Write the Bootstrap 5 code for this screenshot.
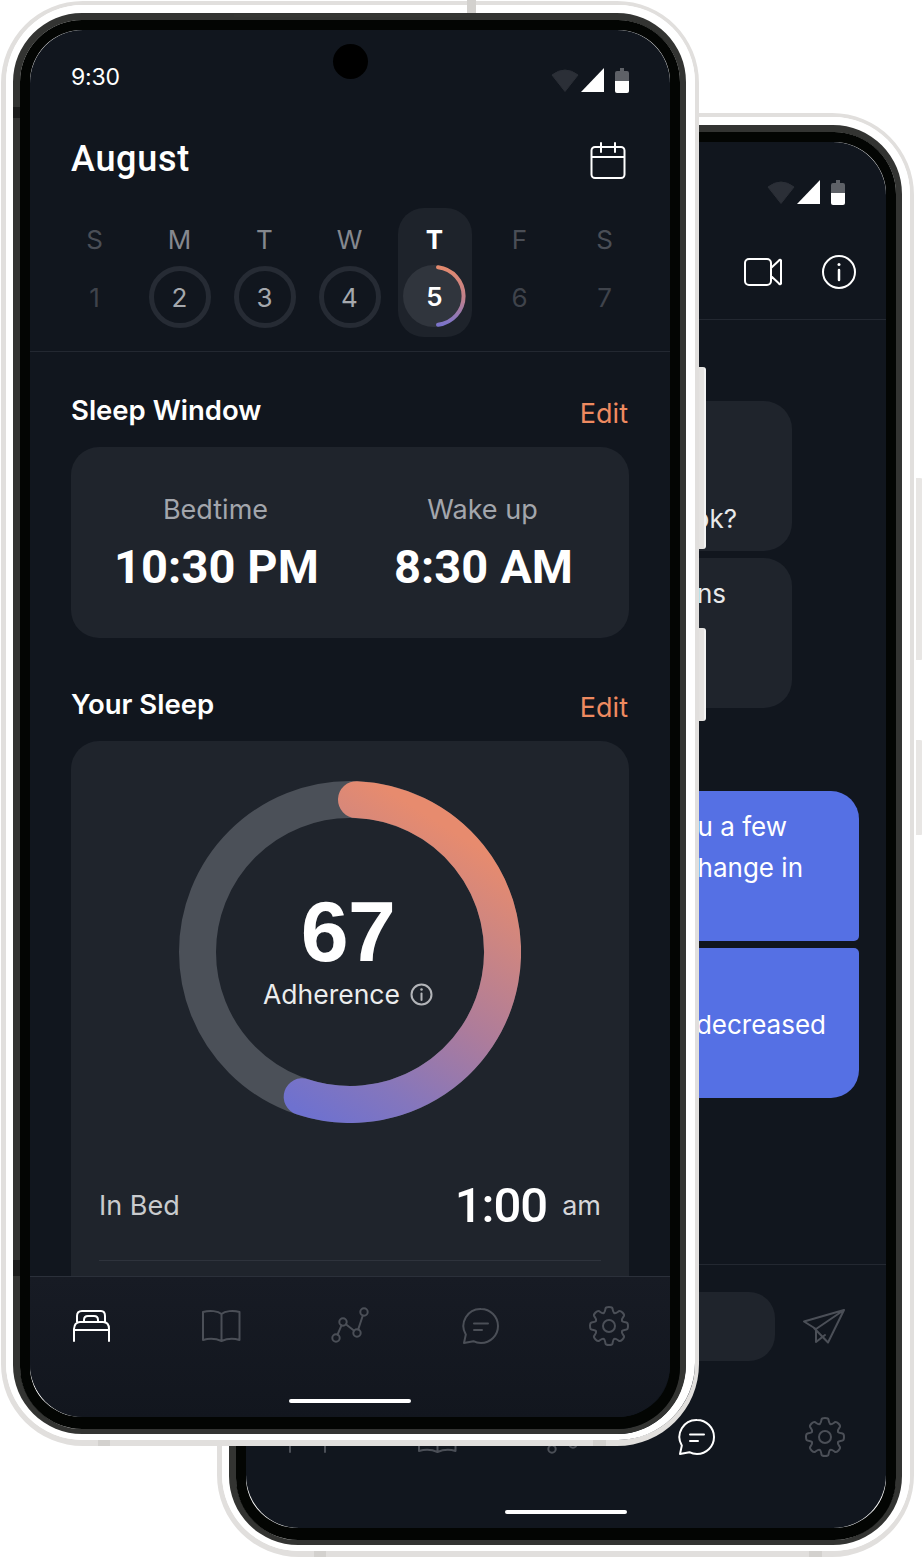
<!DOCTYPE html>
<html lang="en">
<head>
<meta charset="utf-8">
<title>Sleep app</title>
<link rel="stylesheet" href="https://cdn.jsdelivr.net/npm/bootstrap@5.3.0/dist/css/bootstrap.min.css">
<script src="https://cdn.jsdelivr.net/npm/bootstrap@5.3.0/dist/js/bootstrap.bundle.min.js"></script>
<style>
html,body{margin:0;background:#fff;font-family:Inter,"Liberation Sans",sans-serif}
.stage{width:922px;height:1559px;overflow:hidden;position:relative}
.phone{position:absolute}
.ph-front{left:1px;top:1px}
.ph-back{left:217px;top:113px}
.fr-a{border:solid #e1dfdd;border-width:4px 4px 6px 5px;border-radius:82px}
.fr-b{border:solid #fff;border-width:8px 9px 6px 7px;border-radius:77px}
.ph-back .fr-b{border-right-width:8px}
.fr-c{border:solid #333432;border-width:7px 6px 5px 7px;border-radius:69px}
.fr-d{border:solid #030503;border-width:10px 10px 12px 10px;border-radius:62px}
.scr{width:640px;height:1387px;background:#11161e;border-radius:53px;overflow:hidden;color:#fff}
.ph-back .scr{height:1386px}
.sidebtn{position:absolute;width:7px;background:linear-gradient(90deg,#e4e2e0 0 5px,#f4f4f3 5px);border-radius:0 3px 3px 0}
.ph-front .sb1{left:698px;top:366px;height:182px}
.ph-front .sb2{left:698px;top:627px;height:93px}
.ph-back .sb1{left:699px;top:365px;height:182px;background:#e8e6e4}
.ph-back .sb2{left:699px;top:627px;height:95px;background:#e8e6e4}
.tick{position:absolute;background:#d3d1ce}
.tk1{left:97px;bottom:0;width:12px;height:6px}
.tk2{left:592px;bottom:0;width:13px;height:6px}
.tk3{left:466px;top:-1px;width:9px;height:13px}
.grill{position:absolute;left:233px;top:13px;width:236px;height:3px;background:#353633}
.band{position:absolute;left:12px;width:7px;height:11px;background:#1c1d1c}
.bd1{top:106px}
.bd2{top:1259px;height:16px}
.cam{position:absolute;left:332px;top:43px;width:35px;height:35px;background:#000;border-radius:50%}
.stat{padding:38px 41px 0;height:62px}
.clock{font-size:23px;line-height:24px;margin-top:-3px;letter-spacing:-.2px}
.g-sig{margin-left:2px}
.g-bat{margin-left:11px}
.ttl{font-family:Roboto,Inter,sans-serif;font-size:36px;line-height:36px;font-weight:500;margin:-2px 0 0;letter-spacing:.7px}
.hd{padding:51px 42px 0 41px;height:87px}
.week{padding:29px 22px 0}
.dayc{width:85px}
.dayb{width:74px;height:129px;margin:0 auto;padding-top:17px;border-radius:26px}
.dayb.on{background:#1e232b}
.dl{font-size:26px;line-height:30px;text-align:center;color:#4a4e56}
.dl.m{color:#85888e}
.dl.on{color:#fff;font-weight:700}
.dn{width:62px;height:62px;margin:11px auto 0;font-size:26px;color:#3f434b}
.dn.rg{border:5px solid #262b34;border-radius:50%;color:#a5a8ad}
.dn.sel{position:relative;color:#fff;font-weight:600;margin-top:10px}
.dn svg{position:absolute;left:-1px;top:-1px}
.dn b{position:relative;font-weight:600}
.seph{border-top:1px solid #232831;margin-top:14px}
.shd{padding:40px 41px 0;height:95px}
.sh2{padding-top:48px;height:103px}
.sname{font-size:27.500px;line-height:36px;font-weight:600;margin:0}
.edit{font-size:27px;line-height:36px;color:#ee8a60;margin-top:4px;margin-right:1px;text-decoration:none}
.cardx{margin:0 41px;background:#1f242c;border-radius:28px}
.sw{height:191px;padding:45px 12px 0}
.lbl{font-size:27px;line-height:36px;color:#a3a6ac;text-align:center;margin-left:-2px}
.val{font-family:Roboto,Inter,sans-serif;font-size:47px;line-height:56px;font-weight:700;text-align:center;margin-top:11px;letter-spacing:.1px}
.sy{height:620px;padding:40px 28px 0}
.ringb{width:342px;height:342px;margin:0 auto;position:relative}
.ringt{position:absolute;left:-2px;top:0;width:100%;padding-top:108px;text-align:center}
.big{font-family:"Liberation Sans",Arial,sans-serif;font-size:86px;line-height:84px;font-weight:700;letter-spacing:-.5px}
.adh{font-size:26.500px;line-height:36px;margin-top:3px;color:#eceded;gap:10px}
.inbed{margin-top:53px;height:60px;margin-bottom:24px}
.ib-l{font-size:27px;color:#c9cbce}
.ib-v{font-family:Roboto,Inter,sans-serif;font-size:49px;line-height:60px;font-weight:500;letter-spacing:-1px}
.ib-u{font-size:27px;color:#d5d6d9;margin-left:15px}
.ib-rule{border-top:1px solid #2e333c}
.grow{min-height:0}
.nv{height:140px;padding:30px 42px 0 42px;flex:none}
.nv-f{background:linear-gradient(180deg,#171b24,#12161e);border-top:1px solid #2b303a;height:141px}
.hm{width:122px;height:4px;background:#fff;border-radius:2px;margin:54px auto 0}
.ic{width:38px;height:38px;display:block;overflow:visible;fill:none;stroke:#4b4f57;stroke-width:2;stroke-linecap:round;stroke-linejoin:round}
.ic.w{stroke:#fff}
.ic.ic-vid{width:40px;height:30px}
.ic.ic-send{width:42px;height:36px;margin-top:17px}
.chat-i{transform:translateX(1px)}
.hd2{padding:49px 28px 0 41px;height:87px;gap:37px}
.sep2{border-top:1px solid #232831;margin-top:28px}
.chat{padding-top:81px;gap:7px;overflow:hidden}
.bub{height:150px;font-size:26px;line-height:41px;padding:15px 0 0;text-align:right}
.bub span{display:block}
.bub-r{margin-left:41px;width:505px;background:#1f242c;border-radius:28px;color:#e8e9ea}
.bub-s{margin-left:41px;width:572px;background:#5570e4;color:#fff}
.bub-s1{margin-top:76px;border-radius:28px 28px 5px 28px}
.bub-s2{border-radius:28px 5px 28px 28px}
.e55{padding-right:55px}.e66{padding-right:66px}.e72{padding-right:72px}.e56{padding-right:56px}.e33{padding-right:33px}
.skip1{padding-top:41px}.skip2{padding-top:82px}
.ftr{height:124px;border-top:1px solid #232831;padding:27px 41px 0;flex:none;gap:28px}
.inp{width:489px;height:69px;background:#1f242c;border-radius:26px}
.svg-defs{position:absolute;width:0;height:0}
</style>
</head>
<body>
<svg class="svg-defs" aria-hidden="true">
  <defs>
    <symbol id="s-wifi" viewBox="0 0 28 24"><path d="M1 7Q14-3 27 7L14 23.500Z" fill="#2b2f37" stroke="#2b2f37" stroke-linejoin="round"/></symbol>
    <symbol id="s-sig" viewBox="0 0 23 24"><path d="M0 24 23 0V24Z" fill="#fff"/></symbol>
    <symbol id="s-bat" viewBox="0 0 14 25"><path d="M5 0h4v3h3a2 2 0 0 1 2 2v8H0V5a2 2 0 0 1 2-2h3Z" fill="#5e6167"/><path d="M0 13h14v10a2 2 0 0 1-2 2H2a2 2 0 0 1-2-2Z" fill="#fff"/></symbol>
    <symbol id="s-bed" viewBox="0 0 38 38" overflow="visible"><path d="M2 34V22Q2.500 15 8 15H31Q37 15 37 22V34M2 23H37M5 15V9Q5 4 10 4H29Q33 4 33 9V15M12 15V13Q12 9 16 9H22Q26 9 26 13V15"/></symbol>
    <symbol id="s-book" viewBox="0 0 38 38" overflow="visible"><path d="M19.500 7C16 4 8 3 1 5V33C8 31 15 32 19.500 34 24 32 31 31 37.500 33V5C31 3 23 4 19.500 7ZM19.500 7V34"/></symbol>
    <symbol id="s-graph" viewBox="0 0 38 38" overflow="visible"><circle cx="5" cy="31" r="3.700"/><circle cx="12" cy="15" r="3.700"/><circle cx="26" cy="26" r="3.700"/><circle cx="33" cy="5" r="3.700"/><path d="M6.500 27.600 10.500 18.400M14.900 17.300 23.100 23.700M27.200 22.500 31.800 8.500"/></symbol>
    <symbol id="s-chat" viewBox="0 0 38 38" overflow="visible"><path d="M19 2a17 17 0 0 1 0 34c-2.800 0-5.300-.6-7.600-1.800L2 36l1.800-8.400A17 17 0 0 1 19 2ZM12 16.500H26M12 23H20"/></symbol>
    <path id="g-tooth" d="M-5.360-12.930C-4-13.500-4-14.500-3.500-17.500-3.200-19-1.500-19 0-19S3.200-19 3.500-17.500C4-14.500 4-13.500 5.360-12.930"/>
    <symbol id="s-gear" viewBox="0 0 38 38" overflow="visible"><g transform="translate(19 19)"><circle r="6"/><use href="#g-tooth"/><use href="#g-tooth" transform="rotate(45)"/><use href="#g-tooth" transform="rotate(90)"/><use href="#g-tooth" transform="rotate(135)"/><use href="#g-tooth" transform="rotate(180)"/><use href="#g-tooth" transform="rotate(225)"/><use href="#g-tooth" transform="rotate(270)"/><use href="#g-tooth" transform="rotate(315)"/></g></symbol>
    <linearGradient id="g-ring" gradientUnits="userSpaceOnUse" x1="290" y1="60" x2="120" y2="330"><stop offset="0" stop-color="#e78b6e"/><stop offset=".2" stop-color="#cf8680"/><stop offset=".5" stop-color="#ad7c9b"/><stop offset=".8" stop-color="#8476bd"/><stop offset="1" stop-color="#6e71cf"/></linearGradient>
    <linearGradient id="g-day" gradientUnits="userSpaceOnUse" x1="35" y1="3" x2="35" y2="61"><stop offset="0" stop-color="#e48a6e"/><stop offset=".55" stop-color="#c0808c"/><stop offset="1" stop-color="#7a73cb"/></linearGradient>
  </defs>
</svg>

<div class="stage">

  <!-- Back phone: chat screen -->
  <div class="phone ph-back">
    <div class="fr-a"><div class="fr-b"><div class="fr-c"><div class="fr-d">
      <div class="scr d-flex flex-column">
        <div class="stat d-flex justify-content-end align-items-start">
          <div class="d-flex align-items-start">
            <svg width="28" height="24"><use href="#s-wifi"/></svg>
            <svg class="g-sig" width="23" height="24"><use href="#s-sig"/></svg>
            <svg class="g-bat" width="14" height="25"><use href="#s-bat"/></svg>
          </div>
        </div>
        <div class="hd2 d-flex justify-content-end align-items-center">
          <svg class="ic w ic-vid" viewBox="0 0 40 30"><path d="M6 2H24a4 4 0 0 1 4 4V24a4 4 0 0 1-4 4H6a4 4 0 0 1-4-4V6a4 4 0 0 1 4-4ZM28 11 36 3.500a1 1 0 0 1 2 .5V26a1 1 0 0 1-2 .5L28 19"/></svg>
          <svg class="ic w" viewBox="0 0 38 38"><circle cx="19" cy="19" r="16"/><path d="M19 17V27" stroke-width="2.500"/><path d="M19 11.500V11.600" stroke-width="3"/></svg>
        </div>
        <div class="sep2"></div>
        <div class="chat flex-grow-1 grow d-flex flex-column">
          <div class="bub bub-r"><span class="e55 skip2">look?</span></div>
          <div class="bub bub-r"><span class="e66">questions</span></div>
          <div class="bub bub-s bub-s1"><span class="e72">you a few</span><span class="e56">change in</span></div>
          <div class="bub bub-s bub-s2"><span class="e33 skip1">decreased</span></div>
        </div>
        <div class="ftr d-flex align-items-start">
          <div class="inp"></div>
          <svg class="ic ic-send" viewBox="0 0 42 36"><path d="M41 1 1 12.500 13 20ZM41 1 25 33.500 11 19M13 20V33L22 26"/></svg>
        </div>
        <div class="nv d-flex flex-column">
          <div class="d-flex justify-content-between">
            <svg class="ic"><use href="#s-bed"/></svg>
            <svg class="ic"><use href="#s-book"/></svg>
            <svg class="ic"><use href="#s-graph"/></svg>
            <svg class="ic w chat-i"><use href="#s-chat"/></svg>
            <svg class="ic"><use href="#s-gear"/></svg>
          </div>
          <div class="hm"></div>
        </div>
      </div>
    </div></div></div></div>
    <div class="sidebtn sb1"></div>
    <div class="sidebtn sb2"></div>
    <div class="tick tk1"></div>
    <div class="tick tk2"></div>
  </div>

  <!-- Front phone: sleep screen -->
  <div class="phone ph-front">
    <div class="fr-a"><div class="fr-b"><div class="fr-c"><div class="fr-d">
      <div class="scr d-flex flex-column">
        <div class="flex-grow-1 grow overflow-hidden">
          <div class="stat d-flex justify-content-between align-items-start">
            <div class="clock">9:30</div>
            <div class="d-flex align-items-start">
              <svg width="28" height="24"><use href="#s-wifi"/></svg>
              <svg class="g-sig" width="23" height="24"><use href="#s-sig"/></svg>
              <svg class="g-bat" width="14" height="25"><use href="#s-bat"/></svg>
            </div>
          </div>
          <div class="hd d-flex justify-content-between align-items-start">
            <h1 class="ttl">August</h1>
            <svg class="ic w" viewBox="0 0 38 38"><path d="M5 4H31a3.500 3.500 0 0 1 3.500 3.500V31.500a3.500 3.500 0 0 1-3.500 3.500H5A3.500 3.500 0 0 1 1.500 31.500V7.500A3.500 3.500 0 0 1 5 4ZM1.500 14H34.500M11 0V9M25 0V9"/></svg>
          </div>
          <div class="week d-flex">
            <div class="dayc"><div class="dayb"><div class="dl">S</div><div class="dn d-flex align-items-center justify-content-center">1</div></div></div>
            <div class="dayc"><div class="dayb"><div class="dl m">M</div><div class="dn rg d-flex align-items-center justify-content-center">2</div></div></div>
            <div class="dayc"><div class="dayb"><div class="dl m">T</div><div class="dn rg d-flex align-items-center justify-content-center">3</div></div></div>
            <div class="dayc"><div class="dayb"><div class="dl m">W</div><div class="dn rg d-flex align-items-center justify-content-center">4</div></div></div>
            <div class="dayc"><div class="dayb on"><div class="dl on">T</div>
              <div class="dn sel d-flex align-items-center justify-content-center">
                <svg width="64" height="64" viewBox="0 0 64 64" fill="none"><circle cx="31" cy="32" r="31" fill="#30353d"/><path d="M35 3.200A29 29 0 0 1 35 60.800" stroke="url(#g-day)" stroke-width="4" stroke-linecap="round"/></svg>
                <b>5</b>
              </div></div></div>
            <div class="dayc"><div class="dayb"><div class="dl">F</div><div class="dn d-flex align-items-center justify-content-center">6</div></div></div>
            <div class="dayc"><div class="dayb"><div class="dl">S</div><div class="dn d-flex align-items-center justify-content-center">7</div></div></div>
          </div>
          <div class="seph"></div>

          <div class="shd d-flex justify-content-between align-items-start">
            <h2 class="sname">Sleep Window</h2>
            <a class="edit" href="#">Edit</a>
          </div>
          <div class="cardx sw">
            <div class="row g-0">
              <div class="col-6"><div class="lbl">Bedtime</div><div class="val">10:30 PM</div></div>
              <div class="col-6"><div class="lbl">Wake up</div><div class="val">8:30 AM</div></div>
            </div>
          </div>

          <div class="shd sh2 d-flex justify-content-between align-items-start">
            <h2 class="sname">Your Sleep</h2>
            <a class="edit" href="#">Edit</a>
          </div>
          <div class="cardx sy">
            <div class="ringb">
              <svg width="342" height="342" viewBox="0 0 342 342" fill="none">
                <circle cx="171" cy="171" r="152.500" stroke="#4b5058" stroke-width="37"/>
                <path d="M177.500 18.640A152.500 152.500 0 1 1 123.200 315.800" stroke="url(#g-ring)" stroke-width="37" stroke-linecap="round"/>
              </svg>
              <div class="ringt">
                <div class="big">67</div>
                <div class="adh d-flex justify-content-center align-items-center">Adherence
                  <svg width="23" height="23" viewBox="0 0 23 23" fill="none" stroke="#b3b5b9" stroke-width="2"><circle cx="11.500" cy="11.500" r="10"/><path d="M11.500 10.500V17" stroke-linecap="round"/><path d="M11.500 6.500V6.600" stroke-width="2.500" stroke-linecap="round"/></svg>
                </div>
              </div>
            </div>
            <div class="inbed d-flex justify-content-between align-items-center">
              <div class="ib-l">In Bed</div>
              <div class="d-flex align-items-center"><span class="ib-v">1:00</span><span class="ib-u">am</span></div>
            </div>
            <div class="ib-rule"></div>
          </div>
        </div>
        <div class="nv nv-f d-flex flex-column">
          <div class="d-flex justify-content-between">
            <svg class="ic w"><use href="#s-bed"/></svg>
            <svg class="ic"><use href="#s-book"/></svg>
            <svg class="ic"><use href="#s-graph"/></svg>
            <svg class="ic chat-i"><use href="#s-chat"/></svg>
            <svg class="ic"><use href="#s-gear"/></svg>
          </div>
          <div class="hm"></div>
        </div>
      </div>
    </div></div></div></div>
    <div class="cam"></div>
    <div class="grill"></div>
    <div class="band bd1"></div>
    <div class="band bd2"></div>
    <div class="sidebtn sb1"></div>
    <div class="sidebtn sb2"></div>
    <div class="tick tk1"></div>
    <div class="tick tk2"></div>
    <div class="tick tk3"></div>
  </div>
</div>
</body>
</html>
